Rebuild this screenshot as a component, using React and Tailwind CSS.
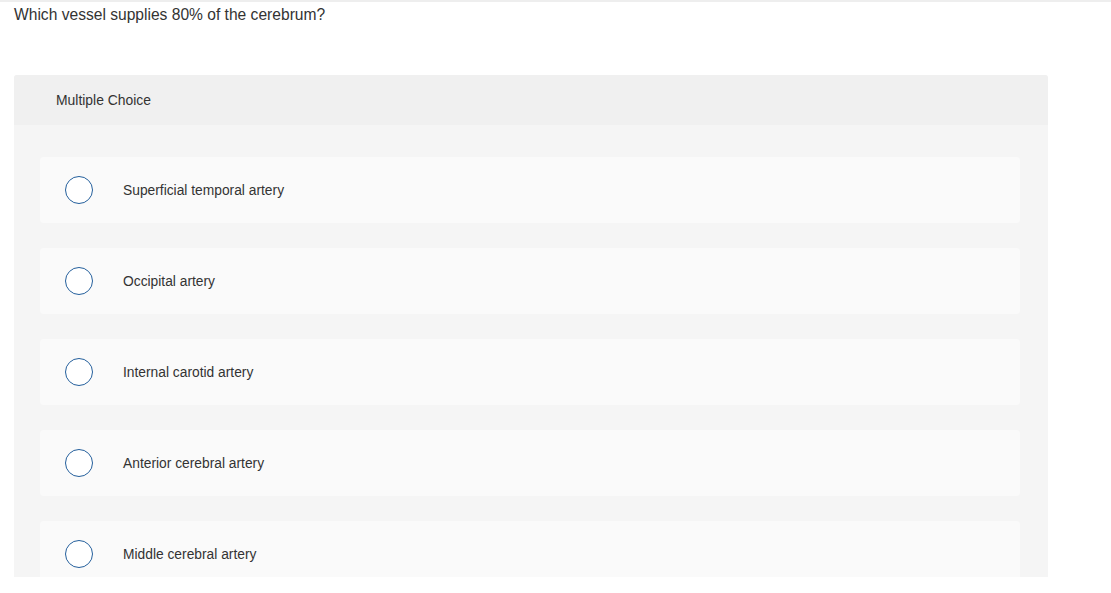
import React from 'react';

const options = [
    'Superficial temporal artery',
    'Occipital artery',
    'Internal carotid artery',
    'Anterior cerebral artery',
    'Middle cerebral artery',
];

export default function App() {
    return (
        <div className="h-[593px] w-[1111px] overflow-hidden bg-white text-[#333]" style={{ fontFamily: '"Liberation Sans", Arial, sans-serif' }}>
            <div className="h-[2px] bg-[#eeeeee]" />
            <div className="pl-[14px] pt-[3px] text-[15.6px] leading-[20px]">Which vessel supplies 80% of the cerebrum?</div>

            <div className="ml-[14px] mt-[50px] w-[1034px] h-[502px] overflow-hidden rounded-t-[3px] bg-[#f5f5f5]">
                <div className="h-[50px] flex items-center pl-[42px] pt-[1px] bg-[#f0f0f0] text-[13.9px]">Multiple Choice</div>
                <div className="flex flex-col gap-[25px] pt-[32px] pl-[26px] pr-[28px]">
                    {options.map((opt) => (
                        <div key={opt} className="h-[66px] shrink-0 flex items-center rounded-[4px] bg-[#fafafa]">
                            <div className="ml-[25px] w-[28px] h-[28px] rounded-full border-[1.5px] border-[#245f9c] bg-white" />
                            <span className="ml-[30px] pt-[3px] text-[13.8px]">{opt}</span>
                        </div>
                    ))}
                </div>
            </div>
        </div>
    );
}
